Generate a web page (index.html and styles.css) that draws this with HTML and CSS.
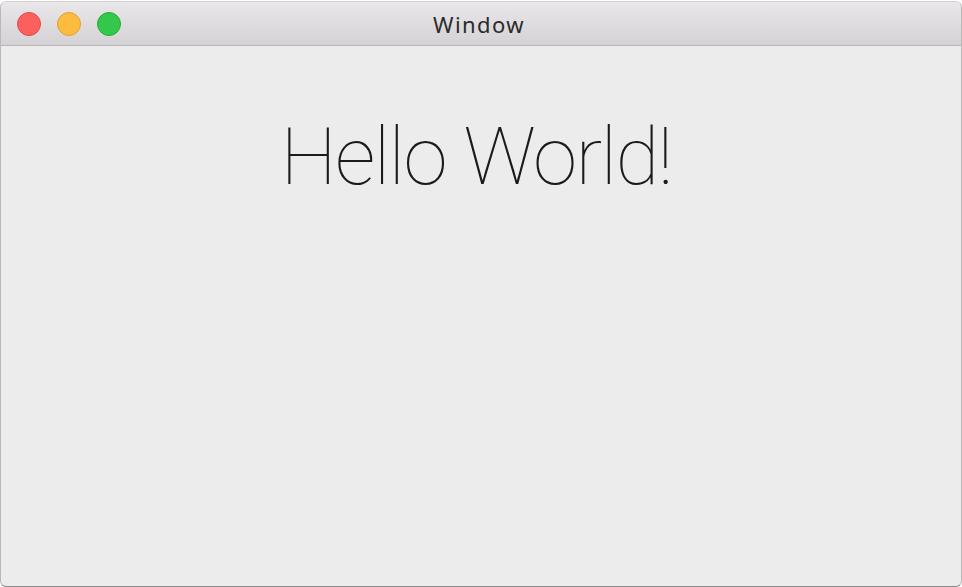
FILE: index.html
```html
<!DOCTYPE html>
<html>
<head>
<meta charset="utf-8">
<link rel="stylesheet" href="styles.css">
</head>
<body>
<div class="window">
  <div class="titlebar">
    <div class="lights">
      <span class="light close"></span>
      <span class="light min"></span>
      <span class="light max"></span>
    </div>
    <div class="title">Window</div>
  </div>
  <div class="content">
    <h1 class="hello">Hello World!</h1>
  </div>
</div>
</body>
</html>
```
FILE: styles.css
```css
html, body {
  margin: 0;
  padding: 0;
  width: 962px;
  height: 587px;
  background: #ffffff;
  overflow: hidden;
}
.window {
  box-sizing: border-box;
  margin-top: 1px;
  width: 962px;
  height: 586px;
  border: 1px solid #b9b9b9;
  border-top-color: #d0d0d0;
  border-bottom-color: #8a8a8a;
  border-radius: 6px;
  overflow: hidden;
  background: #ececec;
  display: flex;
  flex-direction: column;
}
.titlebar {
  position: relative;
  height: 43px;
  flex: none;
  background: linear-gradient(#e9e7e9, #d4d2d4);
  border-bottom: 1px solid #b6b4b6;
  display: flex;
  align-items: center;
  justify-content: center;
}
.lights {
  position: absolute;
  left: 16px;
  top: 10px;
  display: flex;
  gap: 16px;
}
.light {
  box-sizing: border-box;
  width: 24px;
  height: 24px;
  border-radius: 50%;
}
.close { background: #fc605c; border: 1px solid #de4a46; }
.min { background: #fdbc40; border: 1px solid #dea12f; }
.max { background: #34c84a; border: 1px solid #27a73a; }
.title {
  font-family: "Noto Sans", "Liberation Sans", sans-serif;
  font-size: 22px;
  letter-spacing: 1.4px;
  color: #2b2b2b;
  margin-top: 1px;
  margin-right: 4px;
}
.content {
  flex: 1;
  display: flex;
  justify-content: center;
}
.hello {
  margin: 0;
  margin-top: 61px;
  margin-right: 10px;
  font-family: Roboto, "Liberation Sans", sans-serif;
  font-weight: 100;
  font-size: 80px;
  line-height: 100px;
  color: #1a1a1a;
  letter-spacing: -1.6px;
}
```
